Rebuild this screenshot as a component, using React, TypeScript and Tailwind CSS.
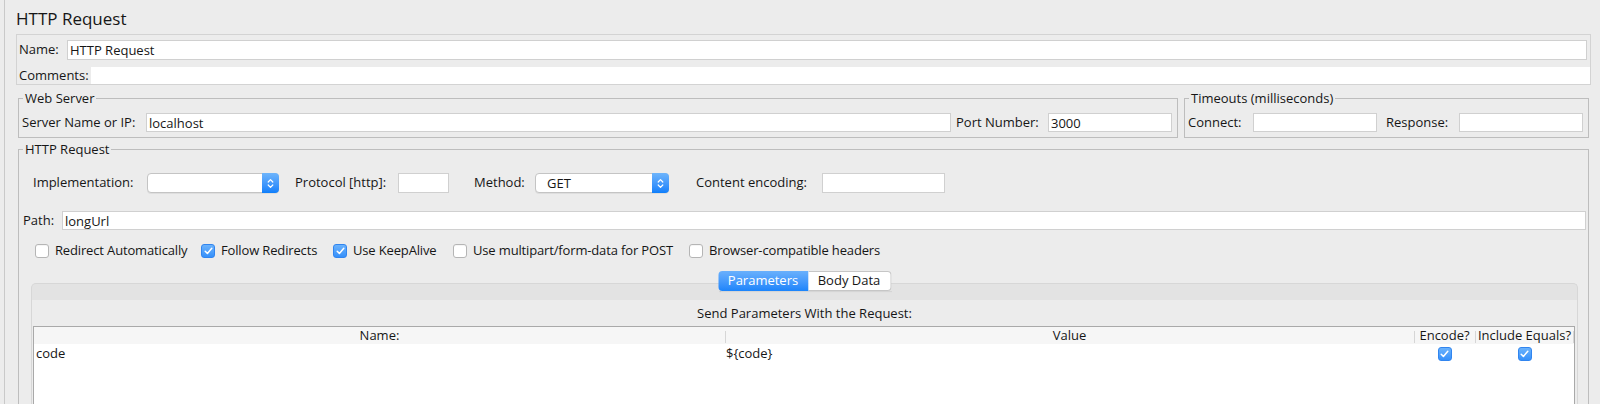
import React from 'react';

const Check = ({ checked = false }: { checked?: boolean }) =>
  checked ? (
    <span className="flex h-[14px] w-[14px] shrink-0 items-center justify-center rounded-[3px] border border-[#3185ef] bg-gradient-to-b from-[#6ab2fc] to-[#3590fa]">
      <svg width="9" height="8" viewBox="0 0 9 8">
        <path d="M1.2 4.3 L3.4 6.4 L7.8 1.2" stroke="white" strokeWidth="1.5" fill="none" strokeLinecap="round" strokeLinejoin="round" />
      </svg>
    </span>
  ) : (
    <span className="h-[14px] w-[14px] shrink-0 rounded-[3px] border border-[#b5b5b5] bg-white shadow-[inset_0_1px_0_rgba(0,0,0,0.04)]" />
  );

const Select = ({ value = '', className = '' }: { value?: string; className?: string }) => (
  <div className={`flex h-[20px] rounded-[4px] border border-[#c4c4c4] bg-white shadow-[0_1px_0_rgba(0,0,0,0.06)] ${className}`}>
    <span className="flex-1 pl-[11px] leading-[18px]">{value}</span>
    <span className="-my-px -mr-px flex w-[17px] items-center justify-center rounded-r-[4px] bg-gradient-to-b from-[#6db4fb] to-[#0b7ffb]">
      <svg width="7" height="11" viewBox="0 0 7 11">
        <path d="M1.2 4 L3.5 1.6 L5.8 4 M1.2 7 L3.5 9.4 L5.8 7" stroke="white" strokeWidth="1.2" fill="none" strokeLinecap="round" strokeLinejoin="round" />
      </svg>
    </span>
  </div>
);

const Field = ({ value = '', className = '' }: { value?: string; className?: string }) => (
  <input
    readOnly
    defaultValue={value}
    className={`h-[19px] min-w-0 border border-[#d0d0d0] bg-white px-[2px] leading-[17px] outline-none ${className}`}
  />
);

const Option = ({ label, checked = false, className = '' }: { label: string; checked?: boolean; className?: string }) => (
  <label className={`flex shrink-0 items-center gap-[6px] whitespace-nowrap ${className}`}>
    <Check checked={checked} />
    <span>{label}</span>
  </label>
);

export default function App() {
  return (
    <div className="h-[404px] w-full overflow-hidden bg-[#ececec] font-['Open_Sans',sans-serif] text-[13px] text-[#161616]">
      <div className="ml-[4px] h-full border-l border-[#c9c9c9] pl-[11px] pr-[9px]">
        {/* Title */}
        <div className="h-[34px] pt-[7px] text-[17px] leading-[24px]">HTTP Request</div>

        {/* Name / Comments */}
        <div className="h-[51px] border border-[#d3d3d3] pl-[2px] pt-[5px]">
          <div className="flex h-[20px] items-center pr-[3px]">
            <span className="w-[48px]">Name:</span>
            <Field value="HTTP Request" className="h-[20px] flex-1" />
          </div>
          <div className="mt-[7px] flex h-[17px] items-center">
            <span className="w-[72px]">Comments:</span>
            <input readOnly className="h-[17px] min-w-0 flex-1 bg-white outline-none" />
          </div>
        </div>

        {/* Web Server / Timeouts */}
        <div className="mx-[2px] mt-[6px] flex gap-[6px]">
          <fieldset className="w-[1160px] border border-[#bdbdbd] pb-[5px] pl-[3px] pr-[5px]">
            <legend className="ml-[1px] px-[2px] leading-[14px]">Web Server</legend>
            <div className="mt-[8px] flex h-[19px] items-center">
              <span className="w-[124px]">Server Name or IP:</span>
              <Field value="localhost" className="flex-1" />
              <span className="ml-[5px] w-[92px]">Port Number:</span>
              <Field value="3000" className="w-[124px]" />
            </div>
          </fieldset>
          <fieldset className="flex-1 border border-[#bdbdbd] pb-[5px] pl-[3px] pr-[5px]">
            <legend className="ml-[1px] px-[2px] leading-[14px]">Timeouts (milliseconds)</legend>
            <div className="mt-[8px] flex h-[19px] items-center">
              <span className="w-[65px]">Connect:</span>
              <Field className="w-[124px]" />
              <span className="ml-[9px] w-[73px]">Response:</span>
              <Field className="w-[124px]" />
            </div>
          </fieldset>
        </div>

        {/* HTTP Request */}
        <fieldset className="mx-[2px] mt-[4px] border border-[#bdbdbd] pl-[4px] pr-[2px]">
          <legend className="px-[2px] leading-[14px]">HTTP Request</legend>

          <div className="mt-[17px] flex h-[20px] items-center pl-[10px]">
            <span className="w-[114px]">Implementation:</span>
            <Select className="w-[132px]" />
            <span className="ml-[16px] w-[103px]">Protocol [http]:</span>
            <Field className="h-[20px] w-[51px]" />
            <span className="ml-[25px] w-[61px]">Method:</span>
            <Select value="GET" className="w-[134px]" />
            <span className="ml-[27px] w-[126px]">Content encoding:</span>
            <Field className="h-[20px] w-[123px]" />
          </div>

          <div className="mt-[18px] flex h-[19px] items-center">
            <span className="w-[39px]">Path:</span>
            <Field value="longUrl" className="flex-1" />
          </div>

          <div className="mt-[11px] flex h-[20px] items-center pl-[12px] tracking-[-0.15px]">
            <Option label="Redirect Automatically" className="w-[166px]" />
            <Option label="Follow Redirects" checked className="w-[132px]" />
            <Option label="Use KeepAlive" checked className="w-[120px]" />
            <Option label="Use multipart/form-data for POST" className="w-[236px]" />
            <Option label="Browser-compatible headers" />
          </div>

          {/* Tabbed pane */}
          <div className="relative mx-[8px] mt-[22px] rounded-t-[5px] border border-b-0 border-[#d7d7d7] bg-[#e3e3e3] pt-[16px]">
            <div className="absolute left-1/2 top-[-13px] flex h-[20px] -translate-x-1/2 shadow-[0_1px_1px_rgba(0,0,0,0.12)]">
              <span className="flex w-[90px] items-center justify-center rounded-l-[4px] bg-gradient-to-b from-[#69b0fc] to-[#1a84fb] text-white">
                Parameters
              </span>
              <span className="flex w-[83px] items-center justify-center rounded-r-[4px] border border-l-0 border-[#c6c6c6] bg-white">
                Body Data
              </span>
            </div>

            <div className="bg-[#ececec]">
              <div className="h-[26px] text-center leading-[26px]">Send Parameters With the Request:</div>
              <div className="ml-[1px] mr-[2px] h-[90px] border-l border-r border-t border-[#a9a9a9] bg-white">
                <div className="grid h-[17px] grid-cols-[691px_689px_61px_1fr] bg-[#f6f6f6] text-center leading-[17px]">
                  <div>Name:</div>
                  <div className="relative">
                    <span className="absolute bottom-[1px] left-0 top-[4px] w-px bg-[#d6d6d6]" />
                    Value
                  </div>
                  <div className="relative">
                    <span className="absolute bottom-[1px] left-0 top-[4px] w-px bg-[#d6d6d6]" />
                    Encode?
                  </div>
                  <div className="relative">
                    <span className="absolute bottom-[1px] left-0 top-[4px] w-px bg-[#d6d6d6]" />
                    Include Equals?
                    <span className="absolute bottom-[1px] right-0 top-[4px] w-px bg-[#d6d6d6]" />
                  </div>
                </div>
                <div className="grid h-[18px] grid-cols-[691px_689px_61px_1fr] items-center">
                  <div className="pl-[2px]">code</div>
                  <div className="pl-[1px]">{'${code}'}</div>
                  <div className="flex justify-center">
                    <Check checked />
                  </div>
                  <div className="flex justify-center">
                    <Check checked />
                  </div>
                </div>
              </div>
            </div>
          </div>
        </fieldset>
      </div>
    </div>
  );
}
